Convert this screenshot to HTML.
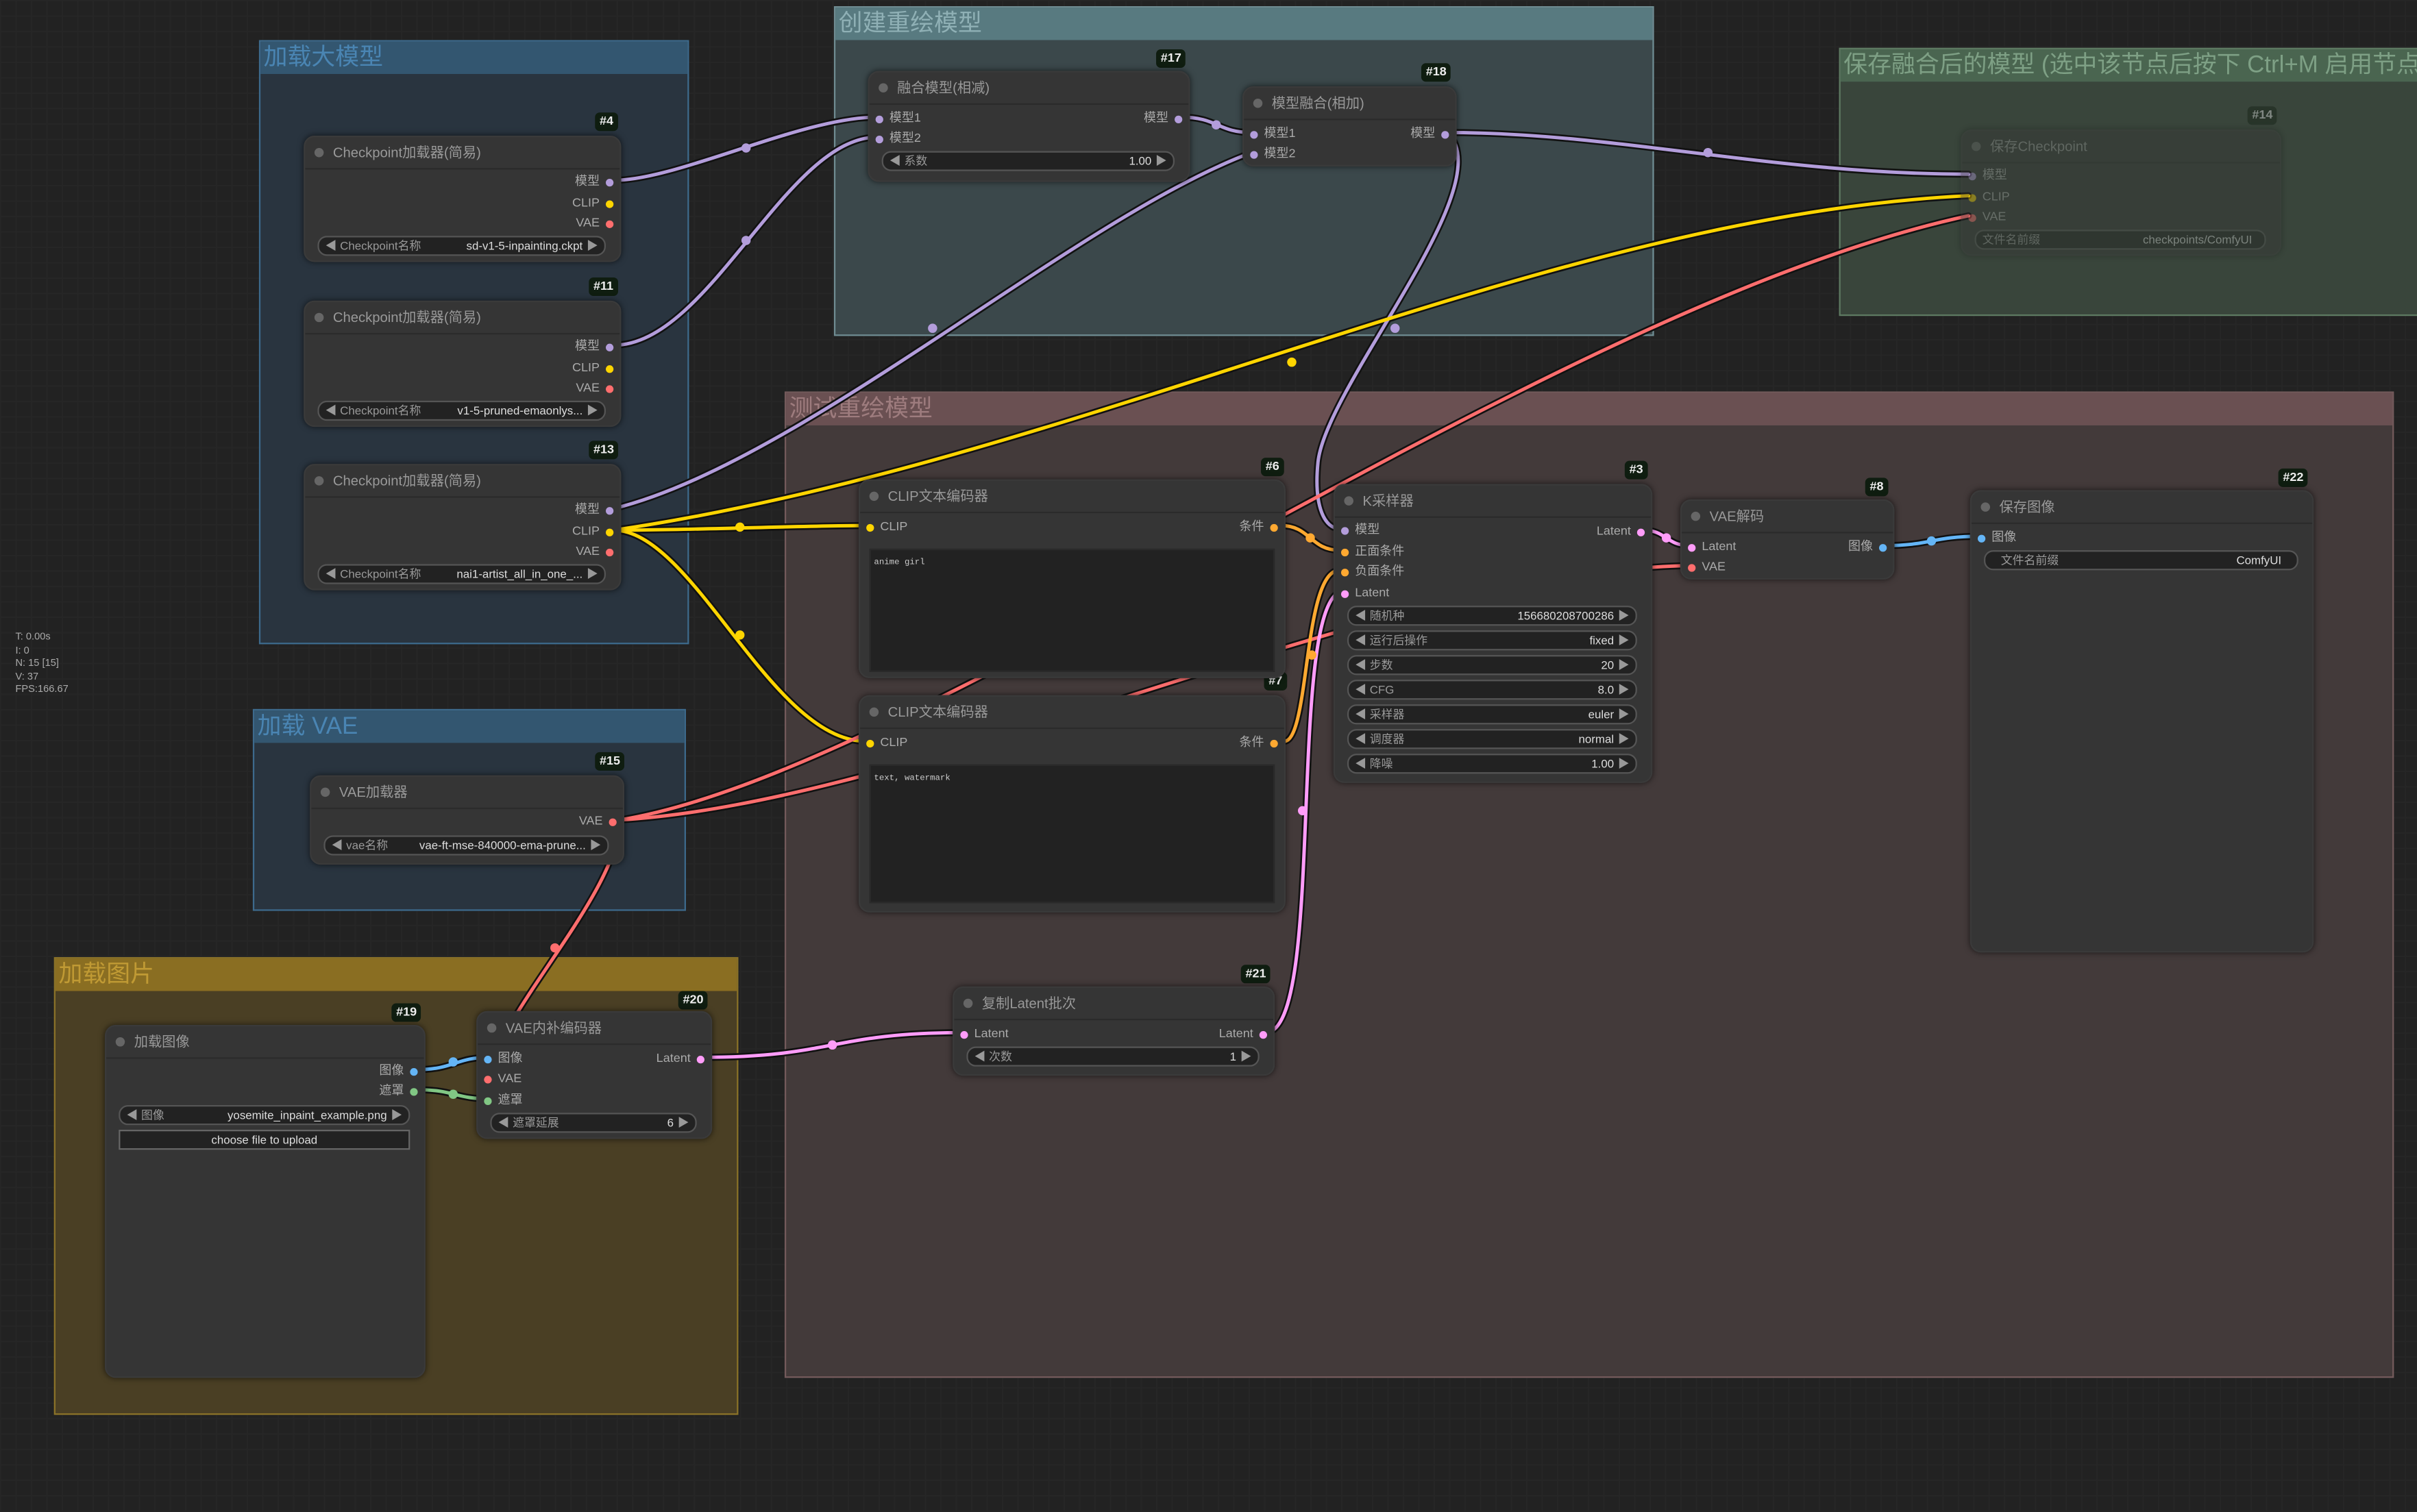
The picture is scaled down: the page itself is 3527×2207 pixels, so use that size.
<!DOCTYPE html>
<html><head><meta charset="utf-8">
<style>
html,body{margin:0;padding:0;background:#222;overflow:hidden;width:3527px;height:2207px}
#root{position:absolute;left:0;top:0;width:1568px;height:981px;transform:scale(2.2494,2.2497);transform-origin:0 0;
background-color:#222;background-image:linear-gradient(#262626 1px,transparent 1px),linear-gradient(90deg,#262626 1px,transparent 1px);background-size:10px 10px;
font-family:"Liberation Sans","Noto Sans CJK SC",sans-serif;}
.g{position:absolute;border:1px solid}
.g .gt{height:21px;font-size:15.5px;line-height:21px;padding-left:2px;white-space:nowrap;overflow:hidden}
.n{position:absolute;background:#353535;border-radius:7px;box-shadow:0 0 4px rgba(0,0,0,.6);border:1px solid #3a3a3a;box-sizing:border-box}
.n .t{height:20px;border-bottom:1px solid #2b2b2b;color:#999;font-size:9px;line-height:20px;padding-left:18px;position:relative;white-space:nowrap}
.n .t:before{content:"";position:absolute;left:6px;top:7px;width:6px;height:6px;border-radius:50%;background:#666}
.o,.in{position:absolute;font-size:8px;color:#aaa;line-height:12px;white-space:nowrap}
.o{right:13px}.in{left:13px}
.o i,.in i{position:absolute;top:3.5px;width:5px;height:5px;border-radius:50%}
.o i{right:-9px}.in i{left:-9px}
.w{position:absolute;left:8px;right:9px;height:11px;background:#222;border:1px solid #555;border-radius:6px;font-size:7.5px;line-height:11px;color:#999;white-space:nowrap;overflow:hidden}
.w .l{position:absolute;left:4px}.w .r{position:absolute;right:4px}
.w .v{position:absolute;right:14px;color:#ddd}
.ta{position:absolute;left:6px;right:6px;background:#222;border:1px solid #2a2a2a;font-family:"Liberation Mono",monospace;font-size:5.5px;color:#ccc;padding:4px 2px;box-sizing:border-box}
.b{position:absolute;background:#0f1d10;color:#eee;font-size:8px;font-weight:bold;line-height:12px;padding:0 3px;border-radius:3px}
.stat{position:absolute;left:10px;top:410px;font-size:6.5px;color:#aaa;line-height:8.5px}
</style></head><body><div id="root">

<div class="g" style="left:168px;top:26px;width:277px;height:390px;background:#29343f;border-color:#3d6a8c"><div class="gt" style="background:#335670;color:#4a85b3">加载大模型</div></div>
<div class="g" style="left:541px;top:4px;width:530px;height:212px;background:#3b484b;border-color:#6f8c92"><div class="gt" style="background:#587a80;color:#8fb0b5">创建重绘模型</div></div>
<div class="g" style="left:1193px;top:31px;width:380px;height:172px;background:#39453b;border-color:#5e7a62"><div class="gt" style="background:#4a6550;color:#7ea085">保存融合后的模型 (选中该节点后按下 Ctrl+M 启用节点)</div></div>
<div class="g" style="left:509px;top:254px;width:1042px;height:638px;background:#433a3a;border-color:#735a5b"><div class="gt" style="background:#6a5052;color:#9e7c7e">测试重绘模型</div></div>
<div class="g" style="left:164px;top:460px;width:279px;height:129px;background:#29343f;border-color:#3d6a8c"><div class="gt" style="background:#335670;color:#4a85b3">加载 VAE</div></div>
<div class="g" style="left:35px;top:621px;width:442px;height:295px;background:#4a3f24;border-color:#8a7228"><div class="gt" style="background:#8a6e22;color:#c09a34">加载图片</div></div>

<svg style="position:absolute;left:0;top:0" width="1568" height="981" fill="none" stroke-linecap="round">
<g stroke="#111" stroke-width="4.5">
<path d="M398 117 C440 117 520 76 569 76"/>
<path d="M398 224 C460 224 510 89 569 89"/>
<path d="M398 330 C520 300 700 140 812 99"/>
<path d="M766 76 C790 76 790 86 812 86"/>
<path d="M939 86 C1050 86 1150 113 1277 113"/>
<path d="M939 86 C975 120 860 250 855 300 C852 330 860 343 869 343"/>
<path d="M398 344 C450 344 520 341 562 341"/>
<path d="M398 344 C450 344 500 481 562 481"/>
<path d="M398 344 C700 300 1000 140 1277 127"/>
<path d="M402 532 C600 500 1000 200 1277 140"/>
<path d="M402 532 C600 520 900 370 1096 367"/>
<path d="M402 532 C402 580 320 660 318 699"/>
<path d="M270 694 C295 694 295 686 318 686"/>
<path d="M270 707 C295 707 295 713 318 713"/>
<path d="M456 686 C540 686 540 670 624 670"/>
<path d="M821 670 C860 670 835 400 869 384"/>
<path d="M831 341 C850 341 850 357 869 357"/>
<path d="M833 481 C850 481 845 370 869 370"/>
<path d="M1066 344 C1081 344 1081 354 1096 354"/>
<path d="M1222 354 C1253 354 1253 348 1284 348"/>
</g>
<g stroke-width="2.2">
<path stroke="#b39ddb" d="M398 117 C440 117 520 76 569 76"/>
<path stroke="#b39ddb" d="M398 224 C460 224 510 89 569 89"/>
<path stroke="#b39ddb" d="M398 330 C520 300 700 140 812 99"/>
<path stroke="#b39ddb" d="M766 76 C790 76 790 86 812 86"/>
<path stroke="#b39ddb" d="M939 86 C1050 86 1150 113 1277 113"/>
<path stroke="#b39ddb" d="M939 86 C975 120 860 250 855 300 C852 330 860 343 869 343"/>
<path stroke="#ffd500" d="M398 344 C450 344 520 341 562 341"/>
<path stroke="#ffd500" d="M398 344 C450 344 500 481 562 481"/>
<path stroke="#ffd500" d="M398 344 C700 300 1000 140 1277 127"/>
<path stroke="#ff6e6e" d="M402 532 C600 500 1000 200 1277 140"/>
<path stroke="#ff6e6e" d="M402 532 C600 520 900 370 1096 367"/>
<path stroke="#ff6e6e" d="M402 532 C402 580 320 660 318 699"/>
<path stroke="#64b5f6" d="M270 694 C295 694 295 686 318 686"/>
<path stroke="#81c784" d="M270 707 C295 707 295 713 318 713"/>
<path stroke="#ff9cf9" d="M456 686 C540 686 540 670 624 670"/>
<path stroke="#ff9cf9" d="M821 670 C860 670 835 400 869 384"/>
<path stroke="#ffa931" d="M831 341 C850 341 850 357 869 357"/>
<path stroke="#ffa931" d="M833 481 C850 481 845 370 869 370"/>
<path stroke="#ff9cf9" d="M1066 344 C1081 344 1081 354 1096 354"/>
<path stroke="#64b5f6" d="M1222 354 C1253 354 1253 348 1284 348"/>
</g>
<g>
<circle cx="484" cy="96" r="3" fill="#b39ddb"/><circle cx="484" cy="156" r="3" fill="#b39ddb"/><circle cx="605" cy="213" r="3" fill="#b39ddb"/>
<circle cx="789" cy="81" r="3" fill="#b39ddb"/><circle cx="1108" cy="99" r="3" fill="#b39ddb"/><circle cx="905" cy="213" r="3" fill="#b39ddb"/>
<circle cx="480" cy="342" r="3" fill="#ffd500"/><circle cx="480" cy="412" r="3" fill="#ffd500"/><circle cx="838" cy="235" r="3" fill="#ffd500"/>
<circle cx="360" cy="615" r="3" fill="#ff6e6e"/><circle cx="294" cy="689" r="3" fill="#64b5f6"/><circle cx="294" cy="710" r="3" fill="#81c784"/>
<circle cx="540" cy="678" r="3" fill="#ff9cf9"/><circle cx="845" cy="526" r="3" fill="#ff9cf9"/><circle cx="850" cy="349" r="3" fill="#ffa931"/>
<circle cx="851" cy="425" r="3" fill="#ffa931"/><circle cx="1081" cy="349" r="3" fill="#ff9cf9"/><circle cx="1253" cy="351" r="3" fill="#64b5f6"/>
</g>
</svg>

<div class="b" style="left:386px;top:73px">#4</div>
<div class="n" style="left:197px;top:88px;width:206px;height:82px"><div class="t">Checkpoint加载器(简易)</div>
<div class="o" style="top:23px">模型<i style="background:#b39ddb"></i></div>
<div class="o" style="top:37px">CLIP<i style="background:#ffd500"></i></div>
<div class="o" style="top:50px">VAE<i style="background:#ff6e6e"></i></div>
<div class="w" style="top:64px"><span class="l">◀ Checkpoint名称</span><span class="v">sd-v1-5-inpainting.ckpt</span><span class="r">▶</span></div></div>

<div class="b" style="left:382px;top:180px">#11</div>
<div class="n" style="left:197px;top:195px;width:206px;height:82px"><div class="t">Checkpoint加载器(简易)</div>
<div class="o" style="top:23px">模型<i style="background:#b39ddb"></i></div>
<div class="o" style="top:37px">CLIP<i style="background:#ffd500"></i></div>
<div class="o" style="top:50px">VAE<i style="background:#ff6e6e"></i></div>
<div class="w" style="top:64px"><span class="l">◀ Checkpoint名称</span><span class="v">v1-5-pruned-emaonlys...</span><span class="r">▶</span></div></div>

<div class="b" style="left:382px;top:286px">#13</div>
<div class="n" style="left:197px;top:301px;width:206px;height:82px"><div class="t">Checkpoint加载器(简易)</div>
<div class="o" style="top:23px">模型<i style="background:#b39ddb"></i></div>
<div class="o" style="top:37px">CLIP<i style="background:#ffd500"></i></div>
<div class="o" style="top:50px">VAE<i style="background:#ff6e6e"></i></div>
<div class="w" style="top:64px"><span class="l">◀ Checkpoint名称</span><span class="v">nai1-artist_all_in_one_...</span><span class="r">▶</span></div></div>

<div class="b" style="left:750px;top:32px">#17</div>
<div class="n" style="left:563px;top:46px;width:209px;height:72px"><div class="t">融合模型(相减)</div>
<div class="in" style="top:24px"><i style="background:#b39ddb"></i>模型1</div>
<div class="in" style="top:37px"><i style="background:#b39ddb"></i>模型2</div>
<div class="o" style="top:24px">模型<i style="background:#b39ddb"></i></div>
<div class="w" style="top:51px"><span class="l">◀ 系数</span><span class="v">1.00</span><span class="r">▶</span></div></div>

<div class="b" style="left:922px;top:41px">#18</div>
<div class="n" style="left:806px;top:56px;width:139px;height:52px"><div class="t">模型融合(相加)</div>
<div class="in" style="top:24px"><i style="background:#b39ddb"></i>模型1</div>
<div class="in" style="top:37px"><i style="background:#b39ddb"></i>模型2</div>
<div class="o" style="top:24px">模型<i style="background:#b39ddb"></i></div></div>

<div style="opacity:.4">
<div class="b" style="left:1458px;top:69px">#14</div>
<div class="n" style="left:1272px;top:84px;width:208px;height:82px"><div class="t">保存Checkpoint</div>
<div class="in" style="top:23px"><i style="background:#b39ddb"></i>模型</div>
<div class="in" style="top:37px"><i style="background:#ffd500"></i>CLIP</div>
<div class="in" style="top:50px"><i style="background:#ff6e6e"></i>VAE</div>
<div class="w" style="top:64px"><span class="l">文件名前缀</span><span class="v" style="right:8px">checkpoints/ComfyUI</span></div></div>
</div>

<div class="b" style="left:820px;top:436px">#7</div>
<div class="n" style="left:557px;top:451px;width:277px;height:141px"><div class="t">CLIP文本编码器</div>
<div class="in" style="top:24px"><i style="background:#ffd500"></i>CLIP</div>
<div class="o" style="top:24px">条件<i style="background:#ffa931"></i></div>
<div class="ta" style="top:44px;height:90px">text, watermark</div></div>

<div class="b" style="left:818px;top:297px">#6</div>
<div class="n" style="left:557px;top:311px;width:277px;height:129px"><div class="t">CLIP文本编码器</div>
<div class="in" style="top:24px"><i style="background:#ffd500"></i>CLIP</div>
<div class="o" style="top:24px">条件<i style="background:#ffa931"></i></div>
<div class="ta" style="top:44px;height:80px">anime girl</div></div>

<div class="b" style="left:1054px;top:299px">#3</div>
<div class="n" style="left:865px;top:314px;width:207px;height:194px"><div class="t">K采样器</div>
<div class="in" style="top:23px"><i style="background:#b39ddb"></i>模型</div>
<div class="in" style="top:37px"><i style="background:#ffa931"></i>正面条件</div>
<div class="in" style="top:50px"><i style="background:#ffa931"></i>负面条件</div>
<div class="in" style="top:64px"><i style="background:#ff9cf9"></i>Latent</div>
<div class="o" style="top:24px">Latent<i style="background:#ff9cf9"></i></div>
<div class="w" style="top:78px"><span class="l">◀ 随机种</span><span class="v">156680208700286</span><span class="r">▶</span></div>
<div class="w" style="top:94px"><span class="l">◀ 运行后操作</span><span class="v">fixed</span><span class="r">▶</span></div>
<div class="w" style="top:110px"><span class="l">◀ 步数</span><span class="v">20</span><span class="r">▶</span></div>
<div class="w" style="top:126px"><span class="l">◀ CFG</span><span class="v">8.0</span><span class="r">▶</span></div>
<div class="w" style="top:142px"><span class="l">◀ 采样器</span><span class="v">euler</span><span class="r">▶</span></div>
<div class="w" style="top:158px"><span class="l">◀ 调度器</span><span class="v">normal</span><span class="r">▶</span></div>
<div class="w" style="top:174px"><span class="l">◀ 降噪</span><span class="v">1.00</span><span class="r">▶</span></div></div>

<div class="b" style="left:1210px;top:310px">#8</div>
<div class="n" style="left:1090px;top:324px;width:139px;height:52px"><div class="t">VAE解码</div>
<div class="in" style="top:24px"><i style="background:#ff9cf9"></i>Latent</div>
<div class="in" style="top:37px"><i style="background:#ff6e6e"></i>VAE</div>
<div class="o" style="top:24px">图像<i style="background:#64b5f6"></i></div></div>

<div class="b" style="left:1478px;top:304px">#22</div>
<div class="n" style="left:1278px;top:318px;width:223px;height:300px"><div class="t">保存图像</div>
<div class="in" style="top:24px"><i style="background:#64b5f6"></i>图像</div>
<div class="w" style="top:38px"><span class="l" style="left:10px">文件名前缀</span><span class="v" style="right:10px">ComfyUI</span></div></div>

<div class="b" style="left:386px;top:488px">#15</div>
<div class="n" style="left:201px;top:503px;width:204px;height:58px"><div class="t">VAE加载器</div>
<div class="o" style="top:23px">VAE<i style="background:#ff6e6e"></i></div>
<div class="w" style="top:38px"><span class="l">◀ vae名称</span><span class="v">vae-ft-mse-840000-ema-prune...</span><span class="r">▶</span></div></div>

<div class="b" style="left:254px;top:651px">#19</div>
<div class="n" style="left:68px;top:665px;width:208px;height:229px"><div class="t">加载图像</div>
<div class="o" style="top:23px">图像<i style="background:#64b5f6"></i></div>
<div class="o" style="top:36px">遮罩<i style="background:#81c784"></i></div>
<div class="w" style="top:51px"><span class="l">◀ 图像</span><span class="v">yosemite_inpaint_example.png</span><span class="r">▶</span></div>
<div class="w" style="top:67px;border-radius:0;border-color:#666;text-align:center;color:#ddd">choose file to upload</div></div>

<div class="b" style="left:440px;top:643px">#20</div>
<div class="n" style="left:309px;top:656px;width:153px;height:83px"><div class="t">VAE内补编码器</div>
<div class="in" style="top:24px"><i style="background:#64b5f6"></i>图像</div>
<div class="in" style="top:37px"><i style="background:#ff6e6e"></i>VAE</div>
<div class="in" style="top:51px"><i style="background:#81c784"></i>遮罩</div>
<div class="o" style="top:24px">Latent<i style="background:#ff9cf9"></i></div>
<div class="w" style="top:65px"><span class="l">◀ 遮罩延展</span><span class="v">6</span><span class="r">▶</span></div></div>

<div class="b" style="left:805px;top:626px">#21</div>
<div class="n" style="left:618px;top:640px;width:209px;height:58px"><div class="t">复制Latent批次</div>
<div class="in" style="top:24px"><i style="background:#ff9cf9"></i>Latent</div>
<div class="o" style="top:24px">Latent<i style="background:#ff9cf9"></i></div>
<div class="w" style="top:38px"><span class="l">◀ 次数</span><span class="v">1</span><span class="r">▶</span></div></div>

<div class="stat">T: 0.00s<br>I: 0<br>N: 15 [15]<br>V: 37<br>FPS:166.67</div>
</div></body></html>
